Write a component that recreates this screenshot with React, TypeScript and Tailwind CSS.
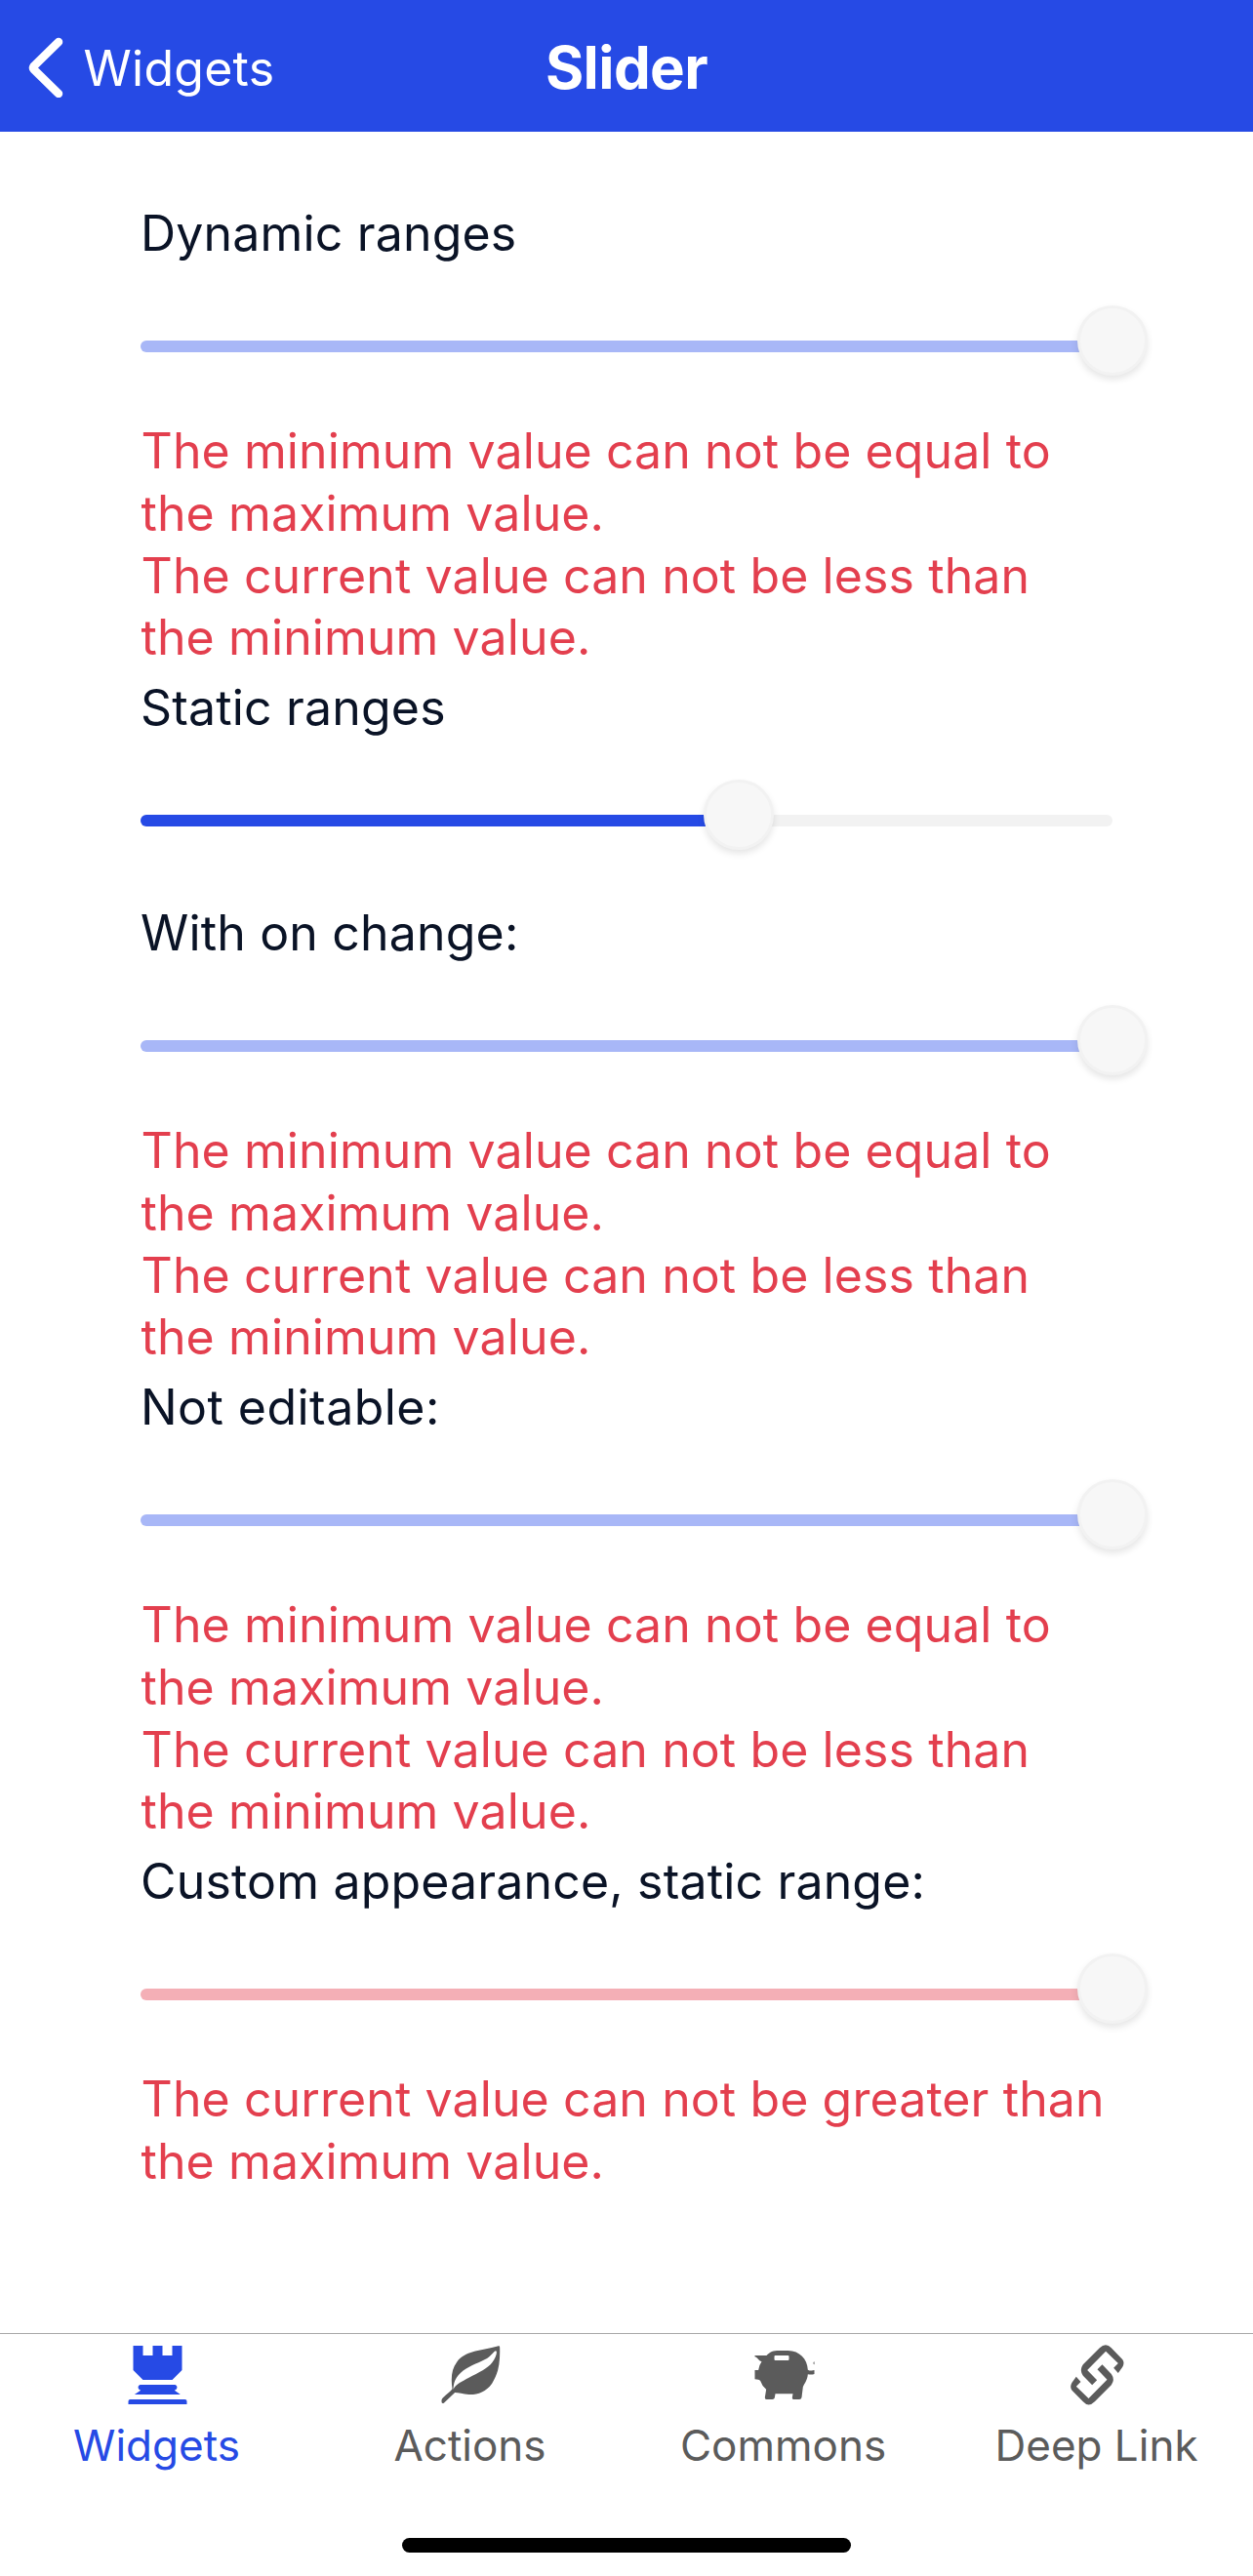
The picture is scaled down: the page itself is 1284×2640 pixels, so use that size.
import type { ReactNode } from "react";

const MIN_EQUALS_MAX = "The minimum value can not be equal to the maximum value.";
const BELOW_MIN = "The current value can not be less than the minimum value.";
const ABOVE_MAX = "The current value can not be greater than the maximum value.";

type SliderProps = { value: number; fill: string };

function Slider({ value, fill }: SliderProps) {
  return (
    <div className="relative mt-[41px] mb-[46px] h-[72px] pt-9">
      <div className="h-3 overflow-hidden rounded-full bg-[#f2f2f2]">
        <div className={`h-full ${fill}`} style={{ width: `${value}%` }} />
      </div>
      <div
        className="absolute top-0 size-[72px] -translate-x-1/2 rounded-full border-[3px] border-[#f2f2f2] bg-[#f7f7f7] shadow-[0_4px_7px_rgba(0,0,0,0.1)]"
        style={{ left: `${value}%` }}
      />
    </div>
  );
}

type FieldProps = SliderProps & { label: string; errors?: string[]; labelClass?: string };

function Field({ label, errors = [], labelClass = "tracking-[0.17px]", ...slider }: FieldProps) {
  return (
    <section className="flex flex-col pb-2">
      <h2 className={`h-16 text-[50px] leading-[63px] text-[#0a1326] ${labelClass}`}>{label}</h2>
      <Slider {...slider} />
      {errors.map((error) => (
        <p key={error} className="pl-[0.5px] text-[50px] leading-[63.75px] tracking-[0.1px] text-[#e33f4e]">
          {error}
        </p>
      ))}
    </section>
  );
}

function RookIcon() {
  return (
    <svg viewBox="91.5 102 180 180" className="size-[60px] overflow-visible" fill="currentColor">
      <path d="M108 102h30v30h30v-30h30v30h30v-30h30v75l-30 30h-90l-30-30z" />
      <path d="M129 222h108q6 2 6 8t-8 9l18 13H112l19-13q-8-3-8-9t6-8z" />
      <path d="M93 282v-9q0-6 6-6h168q6 0 6 6v9z" />
    </svg>
  );
}

function LeafIcon() {
  return (
    <svg viewBox="64.5 72 180 180" className="size-[60px] overflow-visible" fill="currentColor" fillRule="evenodd">
      <path d="M241 73Q245 72 245 77C246 118 243 154 221 188C202 215 176 223 150 222C132 221 118 216 107 216L73 248Q66 252 66 244V239Q67 235 71 231C82 221 94 213 99 205C94 170 97 143 113 122C139 87 184 88 220 78ZM102 206C110 189 130 181 150 170C180 155 209 141 222 123C231 110 236 98 235 91Q234 85 229 89C218 101 209 110 198 115C175 127 146 136 124 156C107 172 103 187 102 206Z" />
    </svg>
  );
}

function PigIcon() {
  return (
    <svg viewBox="67.5 72 180 180" className="size-[60px] overflow-visible" fill="currentColor" fillRule="evenodd">
      <path d="M69 102H105C115 91 126 87 143 87H171C207 88 230 112 232 146Q240 150 247 148L252 147V159Q244 162 232 160C231 177 221 189 217 199L213 231Q212 237 206 237H188Q183 237 184 231L186 220H132L130 232Q129 237 123 237H105Q99 237 100 231L104 206Q91 196 86 180Q82 175 69 175V147H80Q82 132 90 121Q83 119 78 112Q73 106 69 106ZM132 102Q129 102 129 105V114Q129 117 132 117H171Q174 117 174 114V105Q174 102 171 102Z" />
      <path d="M249 125Q249 122 252 121V130Q249 130 249 125Z" />
    </svg>
  );
}

function ChainIcon() {
  return (
    <svg viewBox="70.5 72 180 180" className="size-[60px] overflow-visible" fill="currentColor">
      <path d="M226 156L239 138Q247 124 239 114L205 79Q188 60 169 79L118 130Q106 147 118 164L146 193L161 178L131 147L188 89L226 126L212 140Z" />
      <path d="M97 167L84 185Q76 199 84 209L118 244Q135 263 154 244L205 193Q217 176 205 159L177 130L162 145L192 176L135 234L97 197L111 183Z" />
    </svg>
  );
}

function Tab({ label, icon, active = false }: { label: string; icon: ReactNode; active?: boolean }) {
  return (
    <button
      className={`flex flex-1 flex-col items-center gap-4 pt-3 text-[44px] leading-[52px] ${
        active ? "text-[#264ae5]" : "text-[#5b5b5b]"
      }`}
    >
      {icon}
      <span className="whitespace-nowrap">{label}</span>
    </button>
  );
}

export default function App() {
  return (
    <div className="flex h-[2640px] w-[1284px] flex-col overflow-hidden bg-white font-['Inter',sans-serif]">
      <header className="grid h-[135px] shrink-0 grid-cols-[1fr_auto_1fr] items-center bg-[#264ae5] pt-[3px] text-white">
        <button className="flex items-center pl-[29px] text-[50px] leading-[60px] tracking-[0.25px]">
          <svg viewBox="0 0 36 62" className="mr-[20.5px] h-[62px] w-9" fill="none" stroke="currentColor" strokeWidth="8.5" strokeLinecap="round" strokeLinejoin="round">
            <path d="M31 5L5.5 30Q4.5 31.5 5.5 33L31 58" />
          </svg>
          <span className="pt-0.5">Widgets</span>
        </button>
        <h1 className="text-[60px] leading-[72px] font-bold tracking-[-0.6px]">Slider</h1>
      </header>

      <main className="flex-1 pt-[73px] pr-36 pl-36">
        <Field label="Dynamic ranges" value={100} fill="bg-[#a8b7f7]" errors={[MIN_EQUALS_MAX, BELOW_MIN]} />
        <Field label="Static ranges" value={61.5} fill="bg-[#264ae5]" />
        <Field label="With on change:" value={100} fill="bg-[#a8b7f7]" errors={[MIN_EQUALS_MAX, BELOW_MIN]} />
        <Field
          label="Not editable:"
          labelClass="tracking-[0.45px]"
          value={100}
          fill="bg-[#a8b7f7]"
          errors={[MIN_EQUALS_MAX, BELOW_MIN]}
        />
        <Field label="Custom appearance, static range:" value={100} fill="bg-[#f4afb6]" errors={[ABOVE_MAX]} />
      </main>

      <nav className="flex h-[210px] shrink-0 items-start border-t border-[#a9a9a9]">
        <Tab label="Widgets" icon={<RookIcon />} active />
        <Tab label="Actions" icon={<LeafIcon />} />
        <Tab label="Commons" icon={<PigIcon />} />
        <Tab label="Deep Link" icon={<ChainIcon />} />
      </nav>
      <div className="mx-auto mb-6 h-[15px] w-[460px] shrink-0 rounded-full bg-black" />
    </div>
  );
}
